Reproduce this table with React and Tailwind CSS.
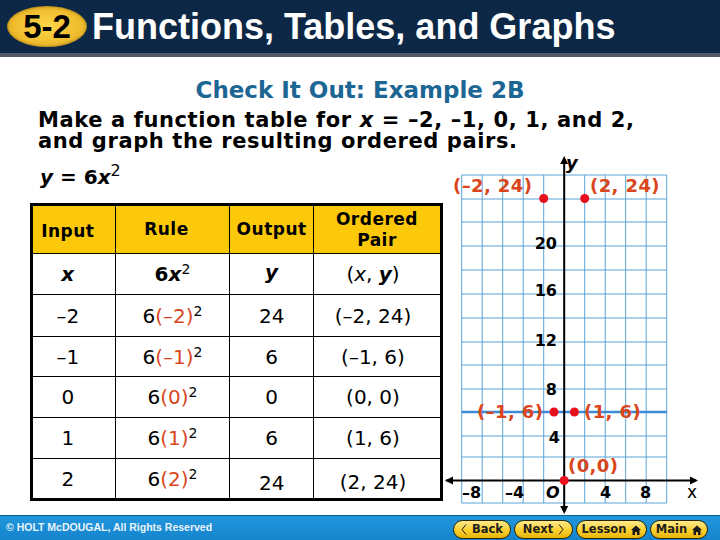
import React from 'react'

const RED = '#d9461c'
const GRID = '#5aa4d8'

function Paren({ children }) {
  return <span style={{ color: RED }}>{children}</span>
}

function HomeIcon() {
  return (
    <svg width="10" height="10" viewBox="0 0 10 10">
      <path d="M5 0.5 L10 5 H8.5 V10 H6 V7 H4 V10 H1.5 V5 H0 Z" fill="#1a1a1a" />
    </svg>
  )
}

function NavButton({ children, w }) {
  return (
    <div
      className={`flex h-[19px] ${w} items-center justify-center gap-[5px] rounded-full border-[1.5px] border-[#2b2400] bg-linear-to-b from-[#ffe98a] via-[#fbd230] to-[#e9b400] font-['DejaVu_Sans'] text-[11.5px] font-bold text-[#1d1d1d]`}
    >
      {children}
    </div>
  )
}

function Graph() {
  const cols = Array.from({ length: 11 }, (_, i) => 21.7 + i * 20.5)
  const rows = [25, 49, 72, 96, 120, 144, 168, 192, 215, 239, 262, 286, 307, 330.5, 353]
  const ax = 124.2
  const ay = 330.5
  const lbl = { fontFamily: 'DejaVu Sans, sans-serif', fontWeight: 700, fontSize: 16, fill: '#000' }
  const red = { fontFamily: 'DejaVu Sans, sans-serif', fontWeight: 700, fontSize: 18, fill: RED, letterSpacing: 0.4 }
  return (
    <svg width="280" height="365" viewBox="0 0 280 365" className="block shrink-0">
      {cols.map((x) => (
        <line key={'c' + x} x1={x} y1={25} x2={x} y2={353} stroke={GRID} strokeWidth="1" />
      ))}
      {rows.map((y) => (
        <line key={'r' + y} x1={21.7} y1={y} x2={226.7} y2={y} stroke={GRID} strokeWidth="1" />
      ))}
      <line x1={21.7} y1={262} x2={226.7} y2={262} stroke="#3f8ad6" strokeWidth="2.5" />

      {/* axes */}
      <line x1={6} y1={ay} x2={256} y2={ay} stroke="#000" strokeWidth="2" />
      <path d="M5 330.5 L13 326.5 L13 334.5 Z" fill="#000" />
      <path d="M258 330.5 L250 326.5 L250 334.5 Z" fill="#000" />
      <line x1={ax} y1={9} x2={ax} y2={362} stroke="#000" strokeWidth="2" />
      <path d="M124.2 6 L120.2 14 L128.2 14 Z" fill="#000" />
      <path d="M124.2 364 L120.2 356 L128.2 356 Z" fill="#000" />

      <text x={126} y={19} style={{ ...lbl, fontSize: 18, fontStyle: 'italic' }}>y</text>

      <text x={117} y={98.5} textAnchor="end" style={lbl}>20</text>
      <text x={117} y={145.5} textAnchor="end" style={lbl}>16</text>
      <text x={117} y={196} textAnchor="end" style={lbl}>12</text>
      <text x={117} y={245} textAnchor="end" style={lbl}>8</text>
      <text x={120} y={292.5} textAnchor="end" style={lbl}>4</text>

      <text x={22} y={348} style={lbl}>–8</text>
      <text x={65} y={348} style={lbl}>–4</text>
      <text x={106} y={348} style={{ ...lbl, fontStyle: 'italic' }}>O</text>
      <text x={160} y={348} style={lbl}>4</text>
      <text x={200} y={348} style={lbl}>8</text>
      <text x={247} y={348} style={{ ...lbl, fontWeight: 400, fontSize: 17 }}>x</text>

      <text x={13} y={42} style={red}>(–2, 24)</text>
      <text x={150} y={42} style={red}>(2, 24)</text>
      <text x={37} y={268} style={red}>(–1, 6)</text>
      <text x={144} y={268} style={red}>(1, 6)</text>
      <text x={128} y={322} style={red}>(0,0)</text>

      {[
        [103.7, 48.5],
        [144.7, 48.5],
        [114, 262],
        [134.4, 262],
        [124.2, 330.5],
      ].map(([x, y]) => (
        <circle key={x + '-' + y} cx={x} cy={y} r="4.5" fill="#e8101c" />
      ))}
    </svg>
  )
}

const rows = [
  ['–2', '–2', '24', '(–2, 24)'],
  ['–1', '–1', '6', '(–1, 6)'],
  ['0', '0', '0', '(0, 0)'],
  ['1', '1', '6', '(1, 6)'],
  ['2', '2', '24', '(2, 24)'],
]
const rowH = ['h-[42px]', 'h-[40px]', 'h-[41px]', 'h-[41px]', 'h-[41px]']

export default function App() {
  return (
    <div className="relative flex h-[540px] w-[720px] flex-col overflow-hidden bg-white font-['DejaVu_Sans',sans-serif] text-black">
      <header className="flex h-[57px] shrink-0 items-center border-b-[4px] border-[#4e5a66] bg-[#0c2846]">
        <div className="ml-[7px] flex h-[41px] w-[80px] items-center justify-center rounded-[50%] bg-radial from-[#ffd84a] to-[#e3a812] shadow-[inset_0_0_3px_rgba(0,0,0,0.5)]">
          <span className="font-['Liberation_Sans',sans-serif] text-[33px] font-bold leading-none text-black">5-2</span>
        </div>
        <h1 className="ml-[5px] font-['Liberation_Sans',sans-serif] text-[36px] font-bold leading-none text-white">
          Functions, Tables, and Graphs
        </h1>
      </header>

      <main className="flex flex-1 flex-col">
        <h2 className="mt-[20px] text-center text-[23px] font-bold leading-[26px] text-[#1c6694]">
          Check It Out: Example 2B
        </h2>
        <p className="ml-[38px] mt-[7px] text-[21px] font-bold leading-[21px] tracking-[0.6px]">
          Make a function table for <i>x</i> = –2, –1, 0, 1, and 2,
          <br />
          and graph the resulting ordered pairs.
        </p>

        <div className="-mt-[2px] flex">
          <div className="w-[440px] shrink-0 pt-[16px]">
            <p className="ml-[40px] text-[20px] font-bold leading-[22px]">
              <i>y</i> = 6<i>x</i>
              <sup className="text-[16px] font-normal">2</sup>
            </p>
            <table className="ml-[30px] mt-[15px] w-[413px] border-collapse border-[3px] border-black text-center text-[20px]">
              <colgroup>
                <col className="w-[84px]" />
                <col className="w-[116px]" />
                <col className="w-[84px]" />
                <col className="w-[129px]" />
              </colgroup>
              <tbody>
                <tr className="h-[49px] bg-[#fcc80a] text-[17px] font-bold leading-[21px] tracking-[0.5px]">
                  <td className="border border-black pr-[12px] pt-[4px]">Input</td>
                  <td className="border border-black pr-[12px]">Rule</td>
                  <td className="border border-black">Output</td>
                  <td className="border border-black">
                    Ordered
                    <br />
                    Pair
                  </td>
                </tr>
                <tr className="h-[41px]">
                  <td className="border border-black pr-[12px] font-bold italic">x</td>
                  <td className="border border-black font-bold">
                    6<i>x</i>
                    <sup className="text-[14px] font-normal">2</sup>
                  </td>
                  <td className="border border-black pb-[4px] font-bold italic">y</td>
                  <td className="border border-black pr-[8px]">
                    (<i>x</i>, <b><i>y</i></b>)
                  </td>
                </tr>
                {rows.map((r, i) => (
                  <tr key={r[0]} className={rowH[i]}>
                    <td className="border border-black pr-[12px]">{r[0]}</td>
                    <td className="border border-black">
                      6<Paren>({r[1]})</Paren>
                      <sup className="text-[14px]">2</sup>
                    </td>
                    <td className={`border border-black ${i === 4 ? 'pt-[8px]' : ''}`}>{r[2]}</td>
                    <td className={`border border-black pr-[8px] ${i === 4 ? 'pt-[6px]' : ''}`}>{r[3]}</td>
                  </tr>
                ))}
              </tbody>
            </table>
          </div>
          <Graph />
        </div>
      </main>

      <footer className="flex h-[25px] shrink-0 items-center justify-between border-t border-[#0e5f99] bg-linear-to-b from-[#2196dd] to-[#1584cc] pl-[6px] pr-[12px]">
        <span className="font-['Liberation_Sans',sans-serif] text-[10.5px] font-bold text-[#e8f4fc]">
          © HOLT McDOUGAL, All Rights Reserved
        </span>
        <div className="mt-[3px] flex items-center gap-[3px]">
          <NavButton w="w-[58px]">
            <svg width="6" height="11" viewBox="0 0 6 11">
              <path d="M5 0.5 L1 5.5 L5 10.5" fill="none" stroke="#1d1d1d" strokeWidth="1" />
            </svg>
            Back
          </NavButton>
          <NavButton w="w-[59px]">
            Next
            <svg width="6" height="11" viewBox="0 0 6 11">
              <path d="M1 0.5 L5 5.5 L1 10.5" fill="none" stroke="#1d1d1d" strokeWidth="1" />
            </svg>
          </NavButton>
          <NavButton w="w-[71px]">
            Lesson <HomeIcon />
          </NavButton>
          <NavButton w="w-[58px]">
            Main <HomeIcon />
          </NavButton>
        </div>
      </footer>
    </div>
  )
}
